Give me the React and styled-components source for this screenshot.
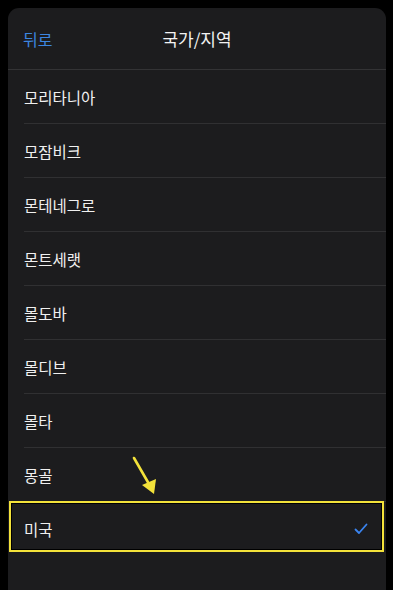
import React from 'react';
import styled, { createGlobalStyle } from 'styled-components';

const GlobalStyle = createGlobalStyle`
    html, body {
        margin: 0;
        padding: 0;
        background: #000;
        font-family: "Noto Sans CJK KR", "Noto Sans", sans-serif;
    }
    *, *::before, *::after {
        box-sizing: border-box;
    }
`;

const Page = styled.div`
    width: 393px;
    height: 590px;
    overflow: hidden;
    padding: 8px 7px 0 8px;
    position: relative;
`;

const Sheet = styled.div`
    background: #1c1c1e;
    border-radius: 11px 11px 0 0;
    height: 640px;
`;

const Header = styled.div`
    height: 62px;
    display: grid;
    grid-template-columns: 1fr auto 1fr;
    align-items: center;
    padding: 0 15px;
    border-bottom: 1px solid #333335;
`;

const BackButton = styled.span`
    color: #3c86e0;
    font-size: 16px;
    font-weight: 400;
`;

const Title = styled.h1`
    margin: 0;
    color: #f2f2f2;
    font-size: 17px;
    font-weight: 400;
`;

const List = styled.ul`
    list-style: none;
    margin: 0;
    padding: 0;
`;

const Row = styled.li`
    height: 54px;
    margin-left: 16px;
    padding-right: 18px;
    display: flex;
    align-items: center;
    justify-content: space-between;
    color: #f0f0f0;
    font-size: 15.5px;
    position: relative;
    border-bottom: ${({ $last }) => ($last ? 'none' : '1px solid #303032')};
`;

const Highlight = styled.div`
    position: absolute;
    left: -15px;
    right: 2px;
    top: -1px;
    bottom: 4px;
    border: 2px solid #f3e23a;
    box-shadow: inset 0 0 0 1px #000;
    pointer-events: none;
`;

const Arrow = styled.svg`
    position: absolute;
    left: 128px;
    top: 452px;
`;

const Check = () => (
    <svg width="14" height="12" viewBox="0 0 14 12">
        <path d="M1.5 6.5 L5 10 L12.5 1.5" fill="none" stroke="#3a84f0" strokeWidth="1.8" strokeLinecap="round" strokeLinejoin="round" />
    </svg>
);

const countries = ['모리타니아', '모잠비크', '몬테네그로', '몬트세랫', '몰도바', '몰디브', '몰타', '몽골', '미국'];
const selected = '미국';

const App = () => {
    return (
        <>
            <GlobalStyle />
            <Page>
                <Sheet>
                    <Header>
                        <BackButton>뒤로</BackButton>
                        <Title>국가/지역</Title>
                    </Header>
                    <List>
                        {countries.map((name, i) => (
                            <Row key={name} $last={i === countries.length - 1}>
                                {name}
                                {name === selected && <Check />}
                                {name === selected && <Highlight />}
                            </Row>
                        ))}
                    </List>
                </Sheet>
                <Arrow width="34" height="46" viewBox="0 0 34 46">
                    <line x1="6" y1="6" x2="21" y2="32" stroke="#f3e23a" strokeWidth="2.6" strokeLinecap="round" />
                    <polygon points="26,42 14,33 28,27" fill="#f3e23a" />
                </Arrow>
            </Page>
        </>
    );
};

export default App;
